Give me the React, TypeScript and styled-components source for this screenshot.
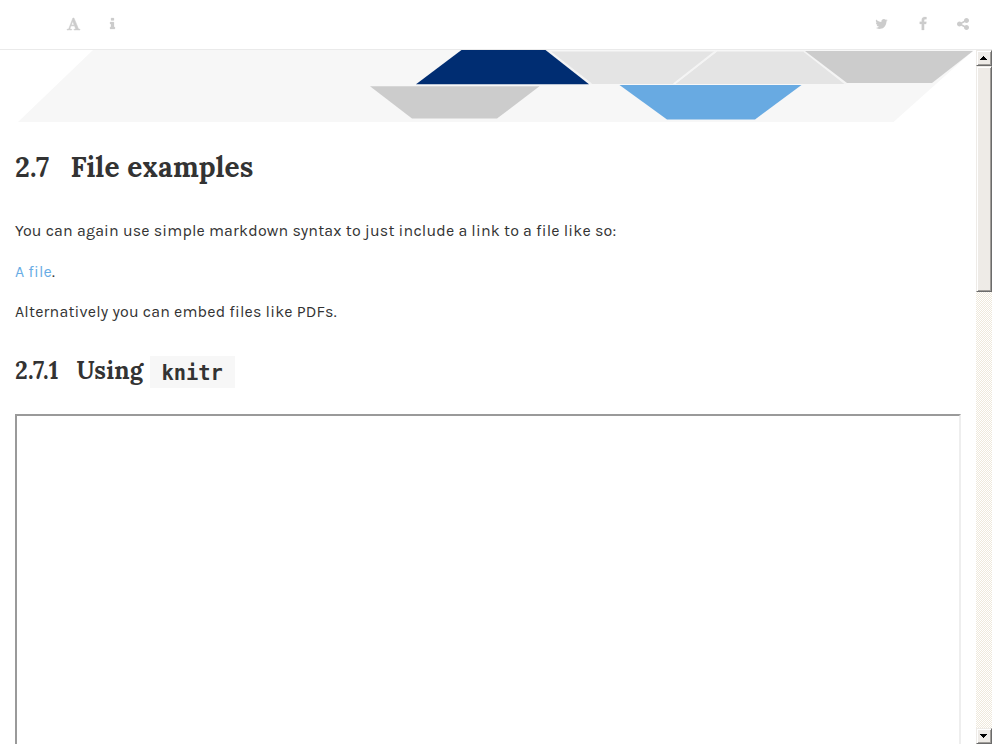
import React from "react";
import styled, { createGlobalStyle, css } from "styled-components";

const GlobalStyle = createGlobalStyle`
  html, body { margin: 0; padding: 0; height: 100%; overflow: hidden; background: #fff; }
  *, *::before, *::after { box-sizing: border-box; }
`;

const serif = `Lora, "Liberation Serif", serif`;
const sans = `Karla, Roboto, sans-serif`;

const Window = styled.div`
  display: flex;
  flex-direction: column;
  width: 992px;
  height: 744px;
  overflow: hidden;
  color: #333;
`;

const Toolbar = styled.header`
  display: flex;
  justify-content: space-between;
  flex: none;
  height: 50px;
  padding: 17px 22px 0 67px;
  border-bottom: 1px solid #eaeaea;
`;

const ToolGroup = styled.div<{ $gap: number }>`
  display: flex;
  gap: ${(p) => p.$gap}px;
`;

const Icon = styled.svg<{ $weight: number }>`
  display: block;
  width: 14px;
  height: 14px;
  overflow: visible;
  fill: #ccc;
  stroke: #ccc;
  stroke-width: ${(p) => p.$weight};
`;

const Body = styled.div`
  display: flex;
  flex: 1;
  min-height: 0;
`;

const Page = styled.main`
  flex: 1;
  min-width: 0;
  overflow: hidden;
`;

const Banner = styled.svg`
  display: block;
  width: 976px;
  height: 74px;
`;

const Content = styled.section`
  display: flex;
  flex-direction: column;
  padding: 0 15px;
  letter-spacing: 0.18px;
`;

const Heading = styled.h2<{ $level: 2 | 3 }>`
  display: flex;
  margin: ${(p) => (p.$level === 2 ? 23 : 31)}px 0 0;
  height: ${(p) => (p.$level === 2 ? 40 : 32)}px;
  line-height: ${(p) => (p.$level === 2 ? 40 : 29)}px;
  font-family: ${serif};
  font-weight: 700;
  font-size: ${(p) => (p.$level === 2 ? 28 : 24)}px;
  white-space: nowrap;
`;

const Run = styled.span<{ $width: number }>`
  flex: none;
  width: ${(p) => p.$width}px;
`;

const Code = styled.code`
  flex: none;
  width: 85px;
  height: 32px;
  padding-left: 11.5px;
  background: #f7f7f7;
  letter-spacing: 0;
  font: 700 20.4px/34px "DejaVu Sans Mono", monospace;
`;

const Paragraph = styled.p<{ $top: number }>`
  margin: ${(p) => p.$top}px 0 0;
  height: 27px;
  font: 400 16px/27px ${sans};
  white-space: nowrap;
`;

const Link = styled.a`
  color: #68ace5;
  text-decoration: none;
`;

const Frame = styled.div`
  width: 946px;
  height: 600px;
  margin-top: 26px;
  border: 2px solid;
  border-color: #9a9a9a #eee #eee #9a9a9a;
`;

const Scrollbar = styled.aside`
  display: flex;
  flex-direction: column;
  flex: none;
  width: 16px;
  background: repeating-conic-gradient(#efe9dc 0 25%, #fff 0 50%) 0 0 / 2px 2px;
`;

const raised = css`
  background: #eeebe7;
  border: 1px solid;
  border-color: #eeebe7 #6b6b6b #6b6b6b #eeebe7;
  box-shadow: inset 1px 1px #fff, inset -1px -1px #a09d99;
`;

const ScrollButton = styled.div`
  ${raised}
  flex: none;
  display: grid;
  place-items: center;
  height: 16px;
`;

const Thumb = styled.div`
  ${raised}
  flex: none;
  height: 226px;
`;

const Track = styled.div`
  flex: 1;
`;

const Arrow = styled.svg`
  display: block;
  width: 8px;
  height: 4px;
  shape-rendering: crispEdges;
`;

const paths = {
  font: "M789 559l-170 450q33 0 136.5 2t160.5 2q19 0 57-2-87-253-184-452zm-725 1105l2-79q23-7 56-12.5t57-10.5 49.5-14.5 44.5-29 31-50.5l237-616 280-724h128q8 14 11 21l205 480q33 78 106 257.5t114 274.5q15 34 58 144.5t72 168.5q20 45 35 57 19 15 88 29.5t84 20.5q6 38 6 57 0 5-.5 13.5t-.5 12.5q-63 0-190-8t-191-8q-76 0-215 7t-178 8q0-43 4-78l131-28q1 0 12.5-2.5t15.5-3.5 14.5-4.5 15-6.5 11-8 9-11 2.5-14q0-16-31-96.5t-72-177.5-42-100l-450-2q-26 58-76.5 195.5t-50.5 162.5q0 22 14 37.5t43.5 24.5 48.5 13.5 57 8.5 41 4q1 19 1 58 0 9-2 27-58 0-174.5-10t-174.5-10q-8 0-26.5 4t-21.5 4q-80 14-188 14z",
  info: "M1216 1344v128q0 26-19 45t-45 19h-512q-26 0-45-19t-19-45v-128q0-26 19-45t45-19h64v-384h-64q-26 0-45-19t-19-45v-128q0-26 19-45t45-19h384q26 0 45 19t19 45v576h64q26 0 45 19t19 45zm-128-1152v192q0 26-19 45t-45 19h-256q-26 0-45-19t-19-45v-192q0-26 19-45t45-19h256q26 0 45 19t19 45z",
  twitter: "M1684 408q-67 98-162 167 1 14 1 42 0 130-38 259.5t-115.5 248.5-184.5 210.5-258 146-323 54.5q-271 0-496-145 35 4 78 4 225 0 401-138-105-2-188-64.5t-114-159.5q33 5 61 5 43 0 85-11-112-23-185.5-111.5t-73.5-205.5v-4q68 38 146 41-66-44-105-115t-39-154q0-88 44-163 121 149 294.5 238.5t371.5 99.5q-8-38-8-74 0-134 94.5-228.5t228.5-94.5q140 0 236 102 109-21 205-78-37 115-142 178 93-10 186-50z",
  facebook: "M1343 12v264h-157q-86 0-116 36t-30 108v189h293l-39 296h-254v759h-306v-759h-255v-296h255v-218q0-186 104-288.5t277-102.5q147 0 228 12z",
  share: "M1344 1024q133 0 226.5 93.5t93.5 226.5-93.5 226.5-226.5 93.5-226.5-93.5-93.5-226.5q0-12 2-34l-360-180q-92 86-218 86-133 0-226.5-93.5t-93.5-226.5 93.5-226.5 226.5-93.5q126 0 218 86l360-180q-2-22-2-34 0-133 93.5-226.5t226.5-93.5 226.5 93.5 93.5 226.5-93.5 226.5-226.5 93.5q-126 0-218-86l-360 180q2 22 2 34t-2 34l360 180q92-86 218-86z",
};

interface GlyphProps {
  name: keyof typeof paths;
  weight?: number;
  nudge?: number;
}

const Glyph = ({ name, weight = 0, nudge = 0 }: GlyphProps) => (
  <Icon viewBox={`${nudge} 0 1792 1792`} $weight={weight} aria-label={name}>
    <path d={paths[name]} />
  </Icon>
);

export default function App() {
  return (
    <Window>
      <GlobalStyle />
      <Toolbar>
        <ToolGroup $gap={25}>
          <Glyph name="font" weight={70} nudge={64} />
          <Glyph name="info" weight={30} nudge={64} />
        </ToolGroup>
        <ToolGroup $gap={26.5}>
          <Glyph name="twitter" nudge={64} />
          <Glyph name="facebook" weight={30} />
          <Glyph name="share" />
        </ToolGroup>
      </Toolbar>
      <Body>
        <Page>
          <Banner viewBox="0 50 976 74">
            <path fill="#f7f7f7" d="M93 50H974L893.500 122H18z" />
            <path fill="#e4e4e4" d="M551 51.500H715L673 84H592z" />
            <path fill="#e4e4e4" d="M717 51.500H804L845 84H675z" />
            <path fill="none" stroke="#f4f4f4" strokeWidth="2" d="M547 50L591 84M716 51L674 84M804 51L846 84" />
            <path fill="#ccc" d="M805 51H973L932 83H847z" />
            <path fill="#ccc" d="M370 86.300H539.500L497 118.500H412z" />
            <path fill="#002d72" d="M461.500 50H545.500L589 84.300H416z" />
            <path fill="#68aae2" d="M619.500 85H801.500L755 119.500H667z" />
          </Banner>
          <Content>
            <Heading as="h2" $level={2}>
              <Run $width={55.4}>2.7</Run>
              <Run $width={190}>File examples</Run>
            </Heading>
            <Paragraph $top={30}>
              You can again use simple markdown syntax to just include a link to a file like so:
            </Paragraph>
            <Paragraph $top={14}>
              <Link>A file</Link>.
            </Paragraph>
            <Paragraph $top={13}>
              Alternatively you can embed files like PDFs.
            </Paragraph>
            <Heading as="h3" $level={3}>
              <Run $width={61.6}>2.7.1</Run>
              <Run $width={73.4}>Using</Run>
              <Code>knitr</Code>
            </Heading>
            <Frame />
          </Content>
        </Page>
        <Scrollbar>
          <ScrollButton>
            <Arrow viewBox="0 0 8 4"><path d="M3 0h1v1h1v1h1v1h1v1H0V3h1V2h1V1h1z" /></Arrow>
          </ScrollButton>
          <Thumb />
          <Track />
          <ScrollButton>
            <Arrow viewBox="0 0 8 4"><path d="M0 0h7v1H6v1H5v1H4v1H3V3H2V2H1V1H0z" /></Arrow>
          </ScrollButton>
        </Scrollbar>
      </Body>
    </Window>
  );
}
